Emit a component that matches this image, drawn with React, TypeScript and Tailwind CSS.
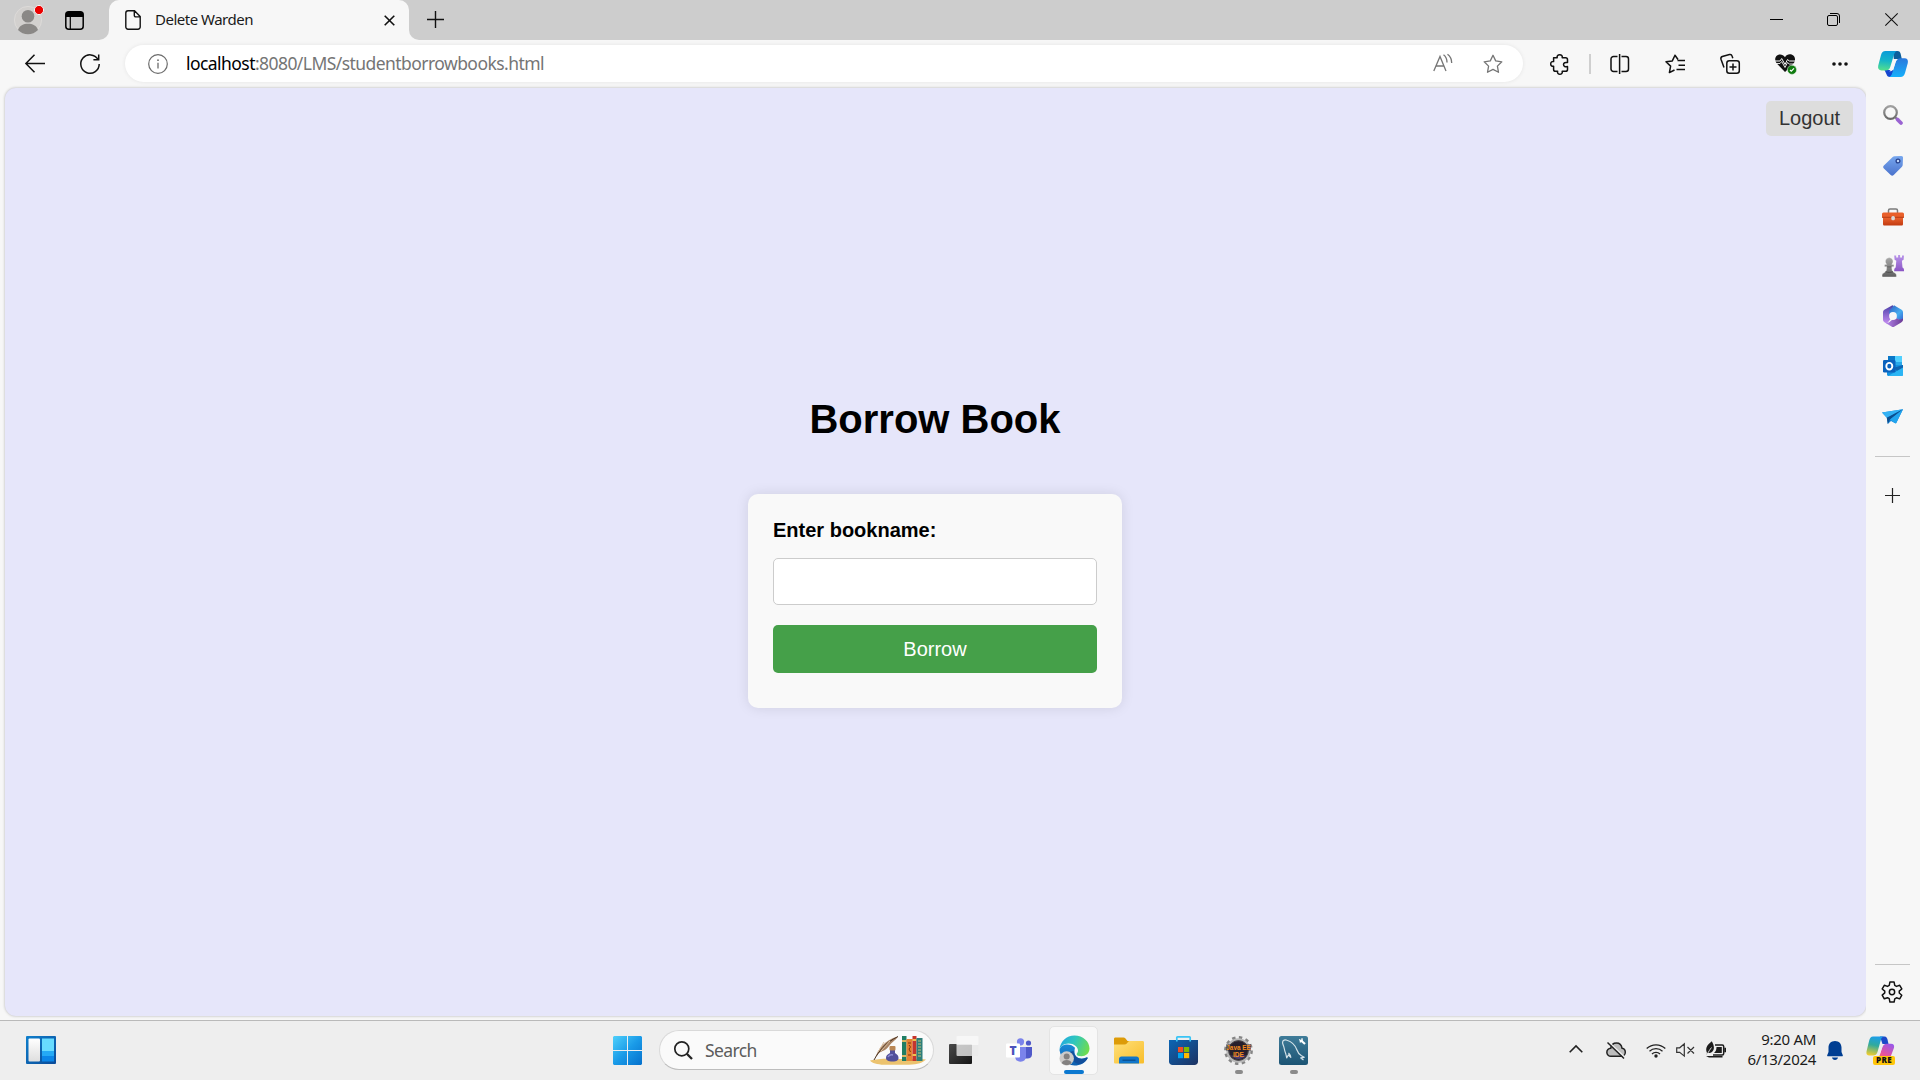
import React from "react";

const UI = "font-['Noto_Sans',sans-serif]";

type SvgProps = { w: number; h: number; vb?: string; className?: string; children: React.ReactNode };

function Svg({ w, h, vb, className = "", children }: SvgProps) {
  return (
    <svg width={w} height={h} viewBox={vb ?? `0 0 ${w} ${h}`} fill="none" className={`shrink-0 overflow-visible ${className}`}>
      {children}
    </svg>
  );
}

const STAR = "M10 1.3 L12.7 6.9 L18.8 7.8 L14.4 12.1 L15.5 18.3 L10 15.4 L4.5 18.3 L5.6 12.1 L1.2 7.8 L7.3 6.9 Z";

function TabStrip() {
  return (
    <div className="flex h-10 shrink-0 bg-[#f7f7f7]">
      <div className="flex w-[109px] items-center rounded-br-[10px] bg-[#cdcdcd] pl-[14px]">
        <div className="relative">
          <Svg w={28} h={28}>
            <circle cx="14" cy="14" r="13.6" fill="#d2d0ce" stroke="#dfdddb" strokeWidth=".8" />
            <circle cx="14" cy="10.2" r="6.3" fill="#8a8886" />
            <path d="M4 24c1.500-4.700 5.500-6.300 10-6.300s8.500 1.600 10 6.300a14 14 0 0 1-20 0z" fill="#8a8886" />
            <circle cx="25" cy="4" r="4.600" fill="#eb0000" stroke="#f3f3f3" strokeWidth="1" />
          </Svg>
        </div>
        <Svg w={19} h={19} className="ml-[23px]">
          <rect x=".8" y=".8" width="17.400" height="17.400" rx="3" stroke="#000" strokeWidth="1.500" />
          <path d="M.8 3.500Q.8.8 3.500.8h12q2.700 0 2.700 2.700V6H.8z" fill="#000" />
          <path d="M5.300 6v12" stroke="#000" strokeWidth="1.200" />
        </Svg>
      </div>
      <div className="w-[300px] bg-[#cdcdcd]">
        <div className="flex h-10 items-center rounded-t-[10px] bg-[#f7f7f7] pl-4">
          <Svg w={16} h={20}>
            <path d="M3 .8h6.500l5.700 5.800V17a2.200 2.200 0 0 1-2.200 2.200H3A2.200 2.200 0 0 1 .8 17V3A2.200 2.200 0 0 1 3 .8zM9.300 1v4.400a1.500 1.500 0 0 0 1.500 1.500h4.300" stroke="#111" strokeWidth="1.400" />
          </Svg>
          <span className={`mb-[2px] ml-[14px] w-[229px] whitespace-nowrap text-[15px] leading-5 tracking-[-0.5px] text-[#1b1b1b] ${UI}`}>Delete Warden</span>
          <Svg w={11} h={11} className="mt-px">
            <path d="M.7.7l9.600 9.600M10.300.7L.7 10.300" stroke="#111" strokeWidth="1.600" />
          </Svg>
        </div>
      </div>
      <div className="flex flex-1 items-center justify-between rounded-bl-[10px] bg-[#cdcdcd] pb-px pl-[18px] pr-[22px]">
        <Svg w={17} h={17}>
          <path d="M8.500 0v17M0 8.500h17" stroke="#111" strokeWidth="1.400" />
        </Svg>
        <div className="flex items-center">
          <Svg w={13} h={13}>
            <path d="M0 6.500h13" stroke="#000" strokeWidth="1" />
          </Svg>
          <Svg w={13} h={13} className="ml-11">
            <rect x=".5" y="2.500" width="10" height="10" rx="1.500" stroke="#000" />
            <path d="M3 .5h7a2.500 2.500 0 0 1 2.500 2.500v7" stroke="#000" />
          </Svg>
          <Svg w={13} h={13} className="ml-[45px]">
            <path d="M.3.3l12.400 12.400M12.700.3L.3 12.700" stroke="#111" strokeWidth="1.100" />
          </Svg>
        </div>
      </div>
    </div>
  );
}

function CopilotMark({ w, h }: { w: number; h: number }) {
  return (
    <Svg w={w} h={h} vb="0 0 30 26">
      <defs>
        <linearGradient id="cpA" x1=".4" y1="0" x2=".3" y2="1">
          <stop offset="0" stopColor="#0a9bd8" />
          <stop offset=".5" stopColor="#16b5c8" />
          <stop offset="1" stopColor="#55e08c" />
        </linearGradient>
        <linearGradient id="cpB" x1=".5" y1="0" x2=".5" y2="1">
          <stop offset="0" stopColor="#2a78dc" />
          <stop offset="1" stopColor="#17b0fb" />
        </linearGradient>
      </defs>
      <path d="M15 0h4.500c2 0 2.700 1.300 3.200 3.100L23.800 8h-8z" fill="#0d5f9c" />
      <path d="M6.500 19h9l-1.500 7h-2c-2.200 0-3-1.200-3.600-3z" fill="#1546d0" />
      <path d="M7.500 0h12c-2 .2-2.900 1.600-3.600 4l-3.500 11.500C11.500 18.500 10 19.500 7.500 19.500H3.500C.8 19.500-.4 17.500.2 14.800L3 4C3.800 1.300 5 0 7.500 0z" fill="url(#cpA)" />
      <path d="M22.500 26h-12c2-.2 3.100-1.600 3.800-4l3.300-10.500c.9-3 2.400-4.200 4.900-4.200h4c2.700 0 3.900 2 3.300 4.700L27 22c-.8 2.700-2 4-4.500 4z" fill="url(#cpB)" />
      <path d="M17.500 8.300h2.200c-1.300.7-2 2-2.500 3.700l-1.800 5.800c-.5 1.600-1.300 2.300-3 2.400h-1.200c1.500-.6 2.300-1.800 2.800-3.400l1.700-5.700c.4-1.400.9-2.400 1.800-2.800z" fill="#f7f7f7" />
    </Svg>
  );
}

function Toolbar() {
  return (
    <div className="flex h-12 shrink-0 items-center bg-[#f7f7f7] pb-px pl-[25px]">
      <Svg w={20} h={19}>
        <path d="M20 9.500H1M9.500.7L.9 9.500l8.600 8.800" stroke="#111" strokeWidth="1.500" />
      </Svg>
      <Svg w={20} h={20} className="ml-[35px]">
        <path d="M18 5.500A9.200 9.200 0 1 0 19.200 10M18.700.5v5.200h-5.300" stroke="#111" strokeWidth="1.500" />
      </Svg>
      <div className="ml-[25px] flex h-[37px] w-[1398px] items-center rounded-full bg-white pl-[23px] shadow-[0_0_4px_rgba(0,0,0,0.08)]">
        <Svg w={20} h={20}>
          <circle cx="10" cy="10" r="9.300" stroke="#6b6b6b" strokeWidth="1.200" />
          <path d="M10 8.800V14.500" stroke="#6b6b6b" strokeWidth="1.300" />
          <circle cx="10" cy="6.200" r=".9" fill="#6b6b6b" />
        </Svg>
        <span className={`mb-[2px] ml-[18px] flex-1 whitespace-nowrap text-[17.500px] leading-6 tracking-[-0.56px] text-[#757575] ${UI}`}>
          <span className="text-black">localhost</span>:8080/LMS/studentborrowbooks.html
        </span>
        <Svg w={20} h={18} className="mb-[2px]">
          <path d="M.8 17L7 2.500 13 17M2.700 12h8.500M10.500.8c2.300 1.700 3.500 4.300 3.500 7.700M14.500.3c2.800 2.100 4.200 5.200 4.200 8.700" stroke="#757575" strokeWidth="1.300" />
        </Svg>
        <Svg w={20} h={20} className="ml-[30px] mr-5">
          <path d={STAR} stroke="#757575" strokeWidth="1.300" strokeLinejoin="round" />
        </Svg>
      </div>
      <Svg w={20} h={20} className="ml-[27px]">
        <path d="M3.600 3.800h3.600c-.5-2 .8-3.100 2.500-3.100s3 1.100 2.500 3.100h3.400c1.100 0 1.900.8 1.900 1.900v2.900c-2.300-.5-4 .2-4 2s1.700 2.500 4 2v2.800c0 1.100-.8 1.900-1.900 1.900h-3.400c.5 2-.8 3-2.300 3s-2.800-1-2.300-3H5.500c-1.100 0-1.900-.8-1.900-1.900v-3.100C1.900 12.600.7 11.500.7 9.900s1.200-2.600 2.900-2.300z" stroke="#111" strokeWidth="1.500" strokeLinejoin="round" />
      </Svg>
      <div className="ml-[19px] h-5 w-[2px] bg-[#cfcfcf]" />
      <Svg w={20} h={20} className="ml-[19px]">
        <path d="M7.500 2.500h-4A2.500 2.500 0 0 0 1 5v10a2.500 2.500 0 0 0 2.500 2.500h4M11.500 2.500H16A2.500 2.500 0 0 1 18.500 5v10a2.500 2.500 0 0 1-2.500 2.500h-4.500M9.600 0v20" stroke="#111" strokeWidth="1.500" />
      </Svg>
      <Svg w={20} h={20} className="ml-[35px]">
        <path d="M13 5.500L10 1.200 7.300 6.900 1 7.800l4.600 4.300-1.200 6.500L9.500 16M12.500 6.600H20M13.500 11.200H20M11.500 15.500H20" stroke="#111" strokeWidth="1.500" strokeLinejoin="round" />
      </Svg>
      <Svg w={20} h={20} className="ml-[35px]">
        <rect x="6.800" y="6.800" width="12.500" height="12.500" rx="2.500" stroke="#111" strokeWidth="1.500" />
        <path d="M13 9.500v7M9.500 13h7M4 13.500L1 5.200C.6 3.900 1 3 2.300 2.500L9.500.6c1.300-.3 2.200.2 2.600 1.500l.7 2.200" stroke="#111" strokeWidth="1.500" />
      </Svg>
      <Svg w={22} h={20} className="ml-[35px]">
        <path d="M10 18L2 9.700C-.6 6.700-.2 3.300 2 1.600 4.600-.3 8 .4 10 3.200 12-.4 16-.4 18.300 1.600c2.300 2 2.300 5.500 0 8.100z" fill="#111" />
        <path d="M0 7h5l1.700-2.500 3.300 6 2.500-5 1.800 1.500H20.500" stroke="#f7f7f7" strokeWidth="1" />
        <path d="M1 9.500h4l1.700-2 3.300 6 2.500-5 1.800 1.500h5" stroke="#f7f7f7" strokeWidth=".9" />
        <circle cx="17" cy="15.800" r="4.600" fill="#107c10" stroke="#f7f7f7" strokeWidth=".5" />
        <path d="M15 16l1.300 1.200 2.700-2.800" stroke="#fff" strokeWidth="1.200" />
      </Svg>
      <Svg w={16} h={4} className="ml-[35px]">
        <circle cx="2" cy="2" r="1.800" fill="#111" />
        <circle cx="8" cy="2" r="1.800" fill="#111" />
        <circle cx="14" cy="2" r="1.800" fill="#111" />
      </Svg>
      <div className="ml-[30px]">
        <CopilotMark w={30} h={26} />
      </div>
    </div>
  );
}

function SidebarCell({ className, children }: { className: string; children: React.ReactNode }) {
  return <div className={`flex w-full items-center justify-center ${className}`}>{children}</div>;
}

function Sidebar() {
  return (
    <div className="flex w-[53px] flex-col items-center bg-[#f7f7f7] pt-[2px]">
      <SidebarCell className="h-[50px]">
        <Svg w={20} h={20}>
          <defs>
            <linearGradient id="lens" x1="0" y1="0" x2="0" y2="1">
              <stop offset="0" stopColor="#a0a0a0" />
              <stop offset="1" stopColor="#696969" />
            </linearGradient>
          </defs>
          <circle cx="7.500" cy="7.500" r="6.300" stroke="url(#lens)" strokeWidth="2.200" />
          <path d="M12 12l3 3" stroke="#777" strokeWidth="2" />
          <path d="M14.500 14.500l3.500 3.500" stroke="#9a63d2" strokeWidth="3.800" strokeLinecap="round" />
        </Svg>
      </SidebarCell>
      <SidebarCell className="h-[51px]">
        <Svg w={20} h={20}>
          <defs>
            <linearGradient id="tag" x1="0" y1="0" x2="0" y2="1">
              <stop offset="0" stopColor="#77a7ee" />
              <stop offset="1" stopColor="#4a72cc" />
            </linearGradient>
          </defs>
          <path d="M11.500.3l6.800-.2c1.200 0 1.800.7 1.700 1.800l-.3 7c0 .8-.4 1.400-1 2l-8 8.200c-1 1-2 1-3 0L.9 12.400c-1-1-1-2 0-3L9.700 1c.5-.5 1-.7 1.800-.7z" fill="url(#tag)" />
          <circle cx="15" cy="5" r="1.900" fill="#bcd5fa" stroke="#27418c" strokeWidth="1.300" />
        </Svg>
      </SidebarCell>
      <SidebarCell className="h-[51px]">
        <Svg w={22} h={18}>
          <defs>
            <linearGradient id="box" x1="0" y1="0" x2="0" y2="1">
              <stop offset="0" stopColor="#ec6530" />
              <stop offset="1" stopColor="#c23a10" />
            </linearGradient>
          </defs>
          <path d="M6.500 5V2.500C6.500 1.500 7 1 8 1h6c1 0 1.500.5 1.500 1.500V5" stroke="#7b7b7b" strokeWidth="1.500" />
          <rect x="0" y="4.500" width="22" height="5.500" rx="1.500" fill="#e9602b" />
          <path d="M1 9.300h20V16c0 1-.6 1.500-1.500 1.500h-17C1.600 17.500 1 17 1 16z" fill="url(#box)" />
          <path d="M0 9.300h22" stroke="#a93410" strokeWidth=".8" />
          <rect x="9.300" y="8" width="3.600" height="4.200" rx="1.500" fill="#d8d8d8" />
        </Svg>
      </SidebarCell>
      <SidebarCell className="h-[48px]">
        <Svg w={22} h={22}>
          <defs>
            <linearGradient id="rook" x1="0" y1="0" x2="0" y2="1">
              <stop offset="0" stopColor="#b995ea" />
              <stop offset="1" stopColor="#8a55c4" />
            </linearGradient>
            <linearGradient id="pawn" x1="0" y1="0" x2="0" y2="1">
              <stop offset="0" stopColor="#a8a8a8" />
              <stop offset="1" stopColor="#5f5f5f" />
            </linearGradient>
          </defs>
          <path d="M12.200.6h2v1.800h1.900V0h2v2.400H20V.6h2l-.4 4.200-1.700 1 .6 6.700c1.200.6 1.700 1.700 1.500 3.700h-9.800c-.1-2 .3-3.100 1.500-3.700l.6-6.700-1.700-1z" fill="url(#rook)" />
          <path d="M7.200 2.600a3.900 3.900 0 0 1 2.600 6.800h1.500c.9 0 .9 2.300 0 2.300H9.600l.6 3.600c.2.900.8 1.600 2 2.200 1.700.8 2.300 1.700 2.300 3.400 0 .8-.4 1.100-1.100 1.100H1.100C.4 22 0 21.700 0 20.900c0-1.700.6-2.600 2.300-3.400 1.200-.6 1.800-1.300 2-2.200l.5-3.600H3.100c-.9 0-.9-2.300 0-2.300h1.500a3.900 3.900 0 0 1 2.600-6.800z" fill="url(#pawn)" stroke="#f7f7f7" strokeWidth=".4" />
          <path d="M3.500 16.700c2.500 1 5 1 7.500 0" stroke="#505050" strokeWidth="1" />
          <path d="M4.800 11.900h4.900" stroke="#5c5c5c" strokeWidth=".8" />
        </Svg>
      </SidebarCell>
      <SidebarCell className="h-[51px]">
        <Svg w={20} h={22}>
          <defs>
            <linearGradient id="m1" x1="0" y1="0" x2="0" y2="1">
              <stop offset="0" stopColor="#4a3fa8" />
              <stop offset="1" stopColor="#c48cf0" />
            </linearGradient>
            <linearGradient id="m2" x1="0" y1="0" x2="1" y2="1">
              <stop offset="0" stopColor="#2f5fc0" />
              <stop offset=".6" stopColor="#45aef0" />
              <stop offset="1" stopColor="#3560d0" />
            </linearGradient>
            <linearGradient id="m3" x1="0" y1="0" x2="1" y2="0">
              <stop offset="0" stopColor="#b98af0" />
              <stop offset="1" stopColor="#6a3a94" />
            </linearGradient>
          </defs>
          <path d="M9 .4L1.800 4.600C.6 5.300 0 6.200 0 7.500v7c0 1.300.6 2.200 1.800 2.900L4 18.500 10 11V.2z" fill="url(#m1)" />
          <path d="M6.300 8.800V6.500c0-1 .5-1.500 1-2L11 .3 18.200 4.600C19.400 5.300 20 6.200 20 7.500v7L17.500 16 10 11z" fill="url(#m2)" />
          <path d="M20 13.500v1c0 1.300-.6 2.200-1.800 2.900l-6.700 4c-1 .7-2 .7-3 0L1.800 17.400c1.700.8 3 .6 4.700-.4L10 14l3.700-.7c2 1.700 4.300 1.700 6.300.2z" fill="url(#m3)" />
          <circle cx="10" cy="11" r="3.900" fill="#f7f7f7" />
        </Svg>
      </SidebarCell>
      <SidebarCell className="h-[50px]">
        <Svg w={20} h={20}>
          <rect x="5" y="0" width="14" height="13" rx="1" fill="#28a8ea" />
          <path d="M5 0h7v6H5z" fill="#0a78c8" />
          <path d="M12 0h7v6h-7z" fill="#50d0ff" />
          <path d="M4 9h16v9.500c0 .8-.6 1.500-1.500 1.500h-13C4.600 20 4 19.300 4 18.500z" fill="#1490df" />
          <path d="M20 9v10L10 12z" fill="#0f64b0" />
          <path d="M5 20L20 11.500v7c0 1-.6 1.500-1.500 1.500z" fill="#2bb5f4" />
          <rect x="0" y="4" width="12.500" height="12.500" rx="1.300" fill="#0b62bd" />
          <ellipse cx="6.300" cy="10.200" rx="3" ry="3.300" stroke="#fff" strokeWidth="1.900" />
        </Svg>
      </SidebarCell>
      <SidebarCell className="h-[50px]">
        <Svg w={21} h={17} className="mt-[2px]">
          <path d="M0 3.500L21 .3 14.500 13.500c-.4.900-1 1-1.700.6L9 12l-3.200 3-1-6.300z" fill="#1684d8" />
          <path d="M0 3.500L21 .3 4.800 8.700z" fill="#34b2f4" />
          <path d="M21 .3L4.800 8.700l1 6.300L8 10.500z" fill="#0c4f8f" />
          <path d="M21 .3L8 10.500l4.800 3.600c.7.400 1.300.3 1.700-.6z" fill="#22a5ee" />
        </Svg>
      </SidebarCell>
      <div className="mt-[15px] h-px w-[35px] bg-[#c6c6c6]" />
      <SidebarCell className="mt-[31px] h-[15px] pr-px">
        <Svg w={15} h={15}>
          <path d="M7.500 0v15M0 7.500h15" stroke="#222" strokeWidth="1.200" />
        </Svg>
      </SidebarCell>
      <div className="mt-auto h-px w-[35px] bg-[#c6c6c6]" />
      <SidebarCell className="mb-[17px] mt-4 h-[22px] pr-px">
        <Svg w={22} h={22} vb="0 0 24 24">
          <path d="M9.700 1.200h4.600l.7 3.600 1.900 1.100 3.500-1.200 2.300 4-2.800 2.400v2.000l2.800 2.400-2.300 4-3.500-1.200-1.900 1.100-.7 3.600H9.700L9 19.300l-1.900-1.100-3.500 1.200-2.300-4 2.800-2.400v-2.000L1.300 8.700l2.300-4 3.500 1.200L9 4.800z" stroke="#111" strokeWidth="1.600" strokeLinejoin="round" />
          <circle cx="12" cy="12" r="2.900" stroke="#111" strokeWidth="1.600" />
        </Svg>
      </SidebarCell>
    </div>
  );
}

function Page() {
  return (
    <div className="flex h-[928px] w-[1861px] flex-col rounded-[11px] bg-[#e6e6fa] pr-px font-['Liberation_Sans',Arial,sans-serif] shadow-[0_0_3px_rgba(0,0,0,0.28)]">
      <div className="flex justify-end pr-3 pt-[13px]">
        <button className="h-[35px] w-[87px] rounded-[5px] bg-[#ddd] pb-[2px] text-[20px] leading-none text-[#333]">Logout</button>
      </div>
      <h1 className="mt-[260px] text-center text-[40px] font-bold leading-[46px] text-black">Borrow Book</h1>
      <div className="mx-auto mt-[52px] h-[214px] w-[374px] rounded-[10px] bg-[#f9f9f9] px-[25px] pt-[25px] shadow-[0_0_12.5px_rgba(0,0,0,0.1)]">
        <label className="block text-[20px] font-bold leading-[23px] text-black">Enter bookname:</label>
        <input className="mt-[16px] block h-[47px] w-full rounded-[5px] border border-[#ccc] bg-white px-3" />
        <button className="mt-5 block h-12 w-full rounded-[5px] bg-[#45a049] text-[20px] leading-none text-white">Borrow</button>
      </div>
    </div>
  );
}

function TaskCell({ running, children }: { running?: boolean; children: React.ReactNode }) {
  return (
    <div className="relative flex h-[60px] w-[55px] shrink-0 items-center justify-center">
      {children}
      {running && <div className="absolute bottom-[6px] h-1 w-2 rounded-full bg-[#8a8a8a]" />}
    </div>
  );
}

function QuillArt() {
  return (
    <Svg w={56} h={30}>
      <path d="M0 25.500c8-2 18-2 28-1.500s20-.5 28 .5c-3 3-8 5-17 5.300H14C7 29.500 2 28 0 25.500z" fill="#ecc36f" />
      <path d="M5 23C8 15 14 5 28 1.500 26 5 22 7 19 11c-3 4.500-7 5-10 7z" fill="#a98465" />
      <path d="M4 25C9 16 15 8 28 1.500" stroke="#4b3524" strokeWidth="1" />
      <path d="M8 17l6-10M11 16l9-10" stroke="#d9bea0" strokeWidth="1" />
      <path d="M20 15h5v3c2.500 1.500 3.500 3 3.500 5s-1.500 3.500-6 3.500-6.500-1.500-6.500-3.500 1-3.500 4-5z" fill="#52509b" />
      <rect x="19.500" y="11" width="6" height="4.500" rx="1" fill="#b98654" />
      <path d="M18 22c1-2 3-2.500 5-2" stroke="#8b8bd3" strokeWidth="1.500" />
      <rect x="32" y="1" width="4.500" height="25" fill="#1f7d63" />
      <rect x="32" y="5" width="4.500" height="2" fill="#d9b460" />
      <rect x="32" y="20" width="4.500" height="2" fill="#d9b460" />
      <rect x="36.500" y="4" width="6" height="22" fill="#e78232" />
      <path d="M38 8h3M38 20h3M39 10l1.500 2-1.500 2 1.500 3" stroke="#7d3212" />
      <rect x="42.500" y="1" width="4" height="25" fill="#c6352c" />
      <rect x="42.500" y="4" width="4" height="2" fill="#efc14d" />
      <rect x="42.500" y="19" width="4" height="2" fill="#efc14d" />
      <rect x="46.500" y="3" width="6" height="23" fill="#2f7f79" />
      <path d="M48 6h3M48 9h3M48 12h3M48 15h3M48 18h3M48 21h3" stroke="#c9c17b" />
    </Svg>
  );
}

function EdgeLogo() {
  return (
    <Svg w={31} h={31} className="ml-px">
      <defs>
        <linearGradient id="eg1" x1="0" y1=".3" x2="1" y2=".6">
          <stop offset="0" stopColor="#23a9e1" />
          <stop offset=".45" stopColor="#2fc7bd" />
          <stop offset="1" stopColor="#70dc4c" />
        </linearGradient>
        <linearGradient id="eg2" x1="0" y1="0" x2="0" y2="1">
          <stop offset="0" stopColor="#1a8bd8" />
          <stop offset="1" stopColor="#0d5faf" />
        </linearGradient>
      </defs>
      <path d="M.5 15C2 23 6 30 15.500 30.500c6 0 10.500-2.500 13-7 .5-1-.3-1.300-1-.9-5 2.500-10 1-11.500-3-.8-3-.5-5 0-6.800C12 8 2 8 .5 15z" fill="url(#eg2)" />
      <path d="M10.500 17c0 6 5 12.500 11 12 3.500-1.200 5.500-3 7-5.500.5-1-.3-1.300-1-.9-5 2.500-12 1-13-6.600z" fill="#124f9c" />
      <path d="M.5 14.500C1.200 6.500 7.500.5 15.500.5c8.500 0 15 6 15 13 0 5-4 7.700-8 7.700-3.500 0-4.800-1-4.800-2 0-.8 1.300-1.500 1.300-3.700 0-3.500-4-7-9.500-7-5 0-8 3-9 6z" fill="url(#eg1)" />
      <circle cx="7.700" cy="23.500" r="7.200" fill="#cdcbc9" />
      <circle cx="7.700" cy="21.500" r="3" fill="#838180" />
      <path d="M2.800 28c.5-2 2.400-3 4.900-3s4.400 1 4.900 3c-2.500 2.800-7.300 2.800-9.800 0z" fill="#838180" />
    </Svg>
  );
}

function GearBadge() {
  return (
    <Svg w={29} h={29}>
      <circle cx="14.500" cy="14.500" r="12.800" stroke="#858585" strokeWidth="3.200" strokeDasharray="3.350 3.350" />
      <circle cx="14.500" cy="14.500" r="11.200" fill="#27202c" stroke="#b8b8b8" strokeWidth="2" />
      <circle cx="14.500" cy="14.500" r="9.800" stroke="#555" strokeWidth=".8" />
      <path d="M7 19.500c4 4.500 11 4.500 15 0z" fill="#4c3d70" />
      <rect x="2" y="8.300" width="25" height="6.300" fill="#27202c" fillOpacity=".6" />
      <text x="2.300" y="14" fontSize="7" fontWeight="700" fontFamily="Liberation Sans, sans-serif" fill="#f58d20" textLength="24.500" lengthAdjust="spacingAndGlyphs">Java EE</text>
      <text x="9" y="20.500" fontSize="7" fontWeight="700" fontFamily="Liberation Sans, sans-serif" fill="#f58d20" textLength="11" lengthAdjust="spacingAndGlyphs">IDE</text>
    </Svg>
  );
}

function Taskbar() {
  return (
    <div className="flex h-[60px] shrink-0 border-t border-[#b9b9b9] bg-[#eeeeee]">
      <div className="flex w-[600px] items-center pl-[26px]">
        <Svg w={30} h={28} className="mb-px">
          <defs>
            <linearGradient id="wg" x1="0" y1="0" x2="1" y2="1">
              <stop offset="0" stopColor="#0f7fcc" />
              <stop offset="1" stopColor="#0a4a98" />
            </linearGradient>
            <linearGradient id="wh" x1="0" y1="0" x2="0" y2="1">
              <stop offset="0" stopColor="#fff" />
              <stop offset="1" stopColor="#dedede" />
            </linearGradient>
          </defs>
          <rect width="30" height="28" rx="1" fill="url(#wg)" />
          <rect x="2.500" y="2.500" width="11.500" height="23" rx="1" fill="url(#wh)" />
          <rect x="16" y="2.500" width="12" height="12.500" fill="#68dcff" />
          <rect x="16" y="15" width="12" height="5" fill="#24aaf6" />
          <rect x="16" y="20" width="12" height="5.500" fill="#0b86e8" />
        </Svg>
      </div>
      <div className="-mt-px flex items-center">
        <div className="flex w-[59px] justify-start pl-[13px]">
          <Svg w={29} h={29}>
            <defs>
              <linearGradient id="win" gradientUnits="userSpaceOnUse" x1="0" y1="0" x2="29" y2="29">
                <stop offset="0" stopColor="#4fd0fb" />
                <stop offset=".5" stopColor="#1a9be8" />
                <stop offset="1" stopColor="#0570cc" />
              </linearGradient>
            </defs>
            <path d="M1 0h13v14H0V1zM15 0h13l1 1v13H15zM0 15h14v14H1l-1-1zM15 15h14v13l-1 1H15z" fill="url(#win)" />
          </Svg>
        </div>
        <div className="flex h-[40px] w-[275px] items-center rounded-full border border-[#d9d9d9] border-b-[#bdbdbd] bg-[#fafafa] pl-[14px]">
          <Svg w={19} h={19}>
            <circle cx="7.800" cy="7.800" r="7" stroke="#222" strokeWidth="1.700" />
            <path d="M12.800 12.800l5.200 5.200" stroke="#222" strokeWidth="2.300" />
          </Svg>
          <span className={`ml-3 w-[165px] text-[17.500px] leading-6 tracking-[-0.6px] text-[#5c5c5c] ${UI}`}>Search</span>
          <QuillArt />
        </div>
        <div className="w-[2px]" />
        <TaskCell>
          <Svg w={30} h={28}>
            <defs>
              <linearGradient id="tv" x1="0" y1="0" x2="1" y2="1">
                <stop offset="0" stopColor="#4a4a4a" />
                <stop offset="1" stopColor="#151515" />
              </linearGradient>
            </defs>
            <rect x="0" y="8" width="23" height="20" rx="1" fill="url(#tv)" />
            <rect x="7.500" y="0" width="22" height="20" rx="1" fill="#eaeaea" fillOpacity=".8" />
            <rect x="7.500" y="0" width="22" height="9" rx="1" fill="#fff" fillOpacity=".6" />
          </Svg>
        </TaskCell>
        <TaskCell>
          <Svg w={26} h={24} className="mb-px">
            <circle cx="14.500" cy="3.800" r="3.600" fill="#7b83eb" />
            <circle cx="22.500" cy="5" r="2.600" fill="#5059c9" />
            <path d="M18 9h8v7.500c0 2.500-2 4-4.500 4H18z" fill="#5059c9" />
            <path d="M9 9h11v9c0 3.500-2 5.700-5.500 5.700S9 21.500 9 18z" fill="#7b83eb" />
            <rect x="0" y="5.500" width="14" height="14" rx="1" fill="#fff" />
            <text x="7" y="16.700" textAnchor="middle" fontSize="12" fontWeight="800" fontFamily="Open Sans, sans-serif" fill="#4b53bc">T</text>
          </Svg>
        </TaskCell>
        <TaskCell>
          <div className="flex h-[49px] w-[49px] items-center justify-center rounded-[5px] border border-[#e4e4e4] bg-[#f8f8f8]">
            <EdgeLogo />
          </div>
          <div className="absolute bottom-[6px] h-1 w-5 rounded-full bg-[#0b78d0]" />
        </TaskCell>
        <TaskCell>
          <Svg w={30} h={27}>
            <defs>
              <linearGradient id="fold" x1="0" y1="0" x2="1" y2="1">
                <stop offset="0" stopColor="#ffe07a" />
                <stop offset="1" stopColor="#f8bd2a" />
              </linearGradient>
            </defs>
            <path d="M0 2c0-1 .5-1.500 1.500-1.500h8c.8 0 1.300.3 2 1L13.500 4H28v8H0z" fill="#dd9b08" />
            <path d="M0 7.500h10.500c1 0 1.700-.3 2.300-1l1.200-1.500c.6-.7 1-1 2-1h12.500c1 0 1.500.5 1.500 1.500V25c0 1-.5 1.500-1.500 1.500h-27C.5 26.500 0 26 0 25z" fill="url(#fold)" />
            <path d="M5 26.500V22c0-1.500 1-2.500 2.500-2.500h15c1.500 0 2.500 1 2.500 2.500v4.500z" fill="#1176ca" />
            <path d="M8.500 23.200h13" stroke="#0a4d8e" strokeWidth="1.300" />
          </Svg>
        </TaskCell>
        <TaskCell>
          <Svg w={29} h={29}>
            <defs>
              <linearGradient id="store" x1="0" y1="0" x2="1" y2="1">
                <stop offset="0" stopColor="#0c66b5" />
                <stop offset="1" stopColor="#1d3261" />
              </linearGradient>
            </defs>
            <path d="M0 4h29v21.500c0 2-1.500 3.500-3.500 3.500h-22C1.500 29 0 27.500 0 25.500z" fill="url(#store)" />
            <path d="M7.800 5.500V1.500c0-.5.200-.7.700-.7h12c.5 0 .7.200.7.700v4" stroke="#3ac4f5" strokeWidth="1.700" />
            <rect x="9" y="11" width="5.200" height="5.200" fill="#f25022" />
            <rect x="15" y="11" width="5.200" height="5.200" fill="#7fba00" />
            <rect x="9" y="17" width="5.200" height="5.200" fill="#00a4ef" />
            <rect x="15" y="17" width="5.200" height="5.200" fill="#ffb900" />
          </Svg>
        </TaskCell>
        <TaskCell running>
          <GearBadge />
        </TaskCell>
        <TaskCell running>
          <Svg w={29} h={29}>
            <defs>
              <linearGradient id="sql" x1="0" y1="0" x2="0" y2="1">
                <stop offset="0" stopColor="#3f7c99" />
                <stop offset="1" stopColor="#1c5474" />
              </linearGradient>
            </defs>
            <rect width="29" height="29" rx="2.500" fill="url(#sql)" />
            <path d="M7 18.500C6 16 5.500 14 5 11.500 4.500 9 3.300 8 3.600 6 4 4 6 3.600 8 4.300c5 1.600 8.200 5.200 9.700 9.200.9 2.600 2.300 4.800 4.800 6.300l2.700 1.500-3.400.6 2.700 2M7 18.500l.7 3.500 1.600-3 2.500 2.300c-.3-2-1.300-3.300-2.300-4.300M24.500 23.900l-1-.8" stroke="#d4e2e8" strokeWidth="1.200" strokeLinejoin="round" />
            <path d="M21.500 4l4.500 4" stroke="#fff" strokeWidth="2.200" />
            <path d="M20.300 3.400l2 2.200M23 2.300l.2 2.700-2.500 1.200" stroke="#fff" strokeWidth="1.300" />
          </Svg>
        </TaskCell>
      </div>
      <div className="-mt-px flex flex-1 items-center justify-end pr-[24px]">
        <Svg w={14} h={8} className="-mt-[2px]">
          <path d="M.7 7.300L7 1l6.300 6.300" stroke="#222" strokeWidth="1.600" />
        </Svg>
        <Svg w={20} h={17} className="ml-[23px]">
          <path d="M5 14.300a4 4 0 0 1-.3-8C5.200 3 7.500 1 10.500 1s5 2 5.500 5.200c2 .3 3.300 1.900 3.300 4s-1.700 4.100-4 4.100z" fill="#bdbdbd" stroke="#222" strokeWidth="1.500" />
          <path d="M2.500-.2l16.500 15.700" stroke="#eee" strokeWidth="1.600" />
          <path d="M1.500.5l16.500 16" stroke="#222" strokeWidth="1.500" />
        </Svg>
        <Svg w={20} h={15} className="ml-[20px]">
          <path d="M.7 5.500a13.500 13.500 0 0 1 18.600 0" stroke="#222" strokeWidth="1.300" />
          <path d="M3.500 8.300a9.400 9.400 0 0 1 13 0M6 11a5.600 5.600 0 0 1 8 0" stroke="#222" strokeWidth="1.300" />
          <circle cx="10" cy="13" r="1.700" fill="#222" />
        </Svg>
        <Svg w={19} h={14} className="ml-[10px]">
          <path d="M.7 4.800h3L8.300.9v12.200L3.700 9.400h-3zM11.500 4l6.500 6.500M18 4l-6.500 6.500" stroke="#333" strokeWidth="1.200" />
        </Svg>
        <Svg w={20} h={16} className="mb-px ml-[11px]">
          <path d="M9 3h7.200q1.500 0 1.500 1.500v7q0 1.500-1.500 1.500H7" stroke="#1c1c1c" strokeWidth="1.500" />
          <path d="M10.500 5h5.300v6H8c1.800-1.300 2.500-3.500 2.500-6z" fill="#1c1c1c" />
          <path d="M18.300 5.800H20v4.400h-1.700zM0 14h16.500v1.500H3z" fill="#1c1c1c" />
          <path d="M1 11C-1 6 1 3 5.800-.8 8.500 4 8.700 7.500 6 10c-1.500 1.300-3.300 1.300-4.300.7L.5 13z" fill="#1c1c1c" />
          <path d="M1.300 12.500C2.500 9.500 4 7.500 5.500 5.500" stroke="#eee" strokeWidth=".9" />
        </Svg>
        <div className={`mb-[2px] ml-[14px] w-[76px] whitespace-nowrap text-right text-[15px] leading-5 tracking-[-0.3px] text-[#1b1b1b] ${UI}`}>
          <div>9:20 AM</div>
          <div>6/13/2024</div>
        </div>
        <Svg w={16} h={19} className="ml-[11px]">
          <path d="M8 0c4 0 6.500 2.800 6.500 6.500V11l1.300 3.200c.2.600-.1 1.100-.8 1.100H1c-.7 0-1-.5-.8-1.100L1.500 11V6.500C1.500 2.800 4 0 8 0zM5 16.500h6C10.700 18 9.600 19 8 19s-2.700-1-3-2.500z" fill="#003e92" />
        </Svg>
        <div className="relative ml-[23px] h-[29px] w-[30px]">
          <Svg w={30} h={29}>
            <defs>
              <linearGradient id="pa" x1=".5" y1="0" x2=".3" y2="1">
                <stop offset="0" stopColor="#1b9de8" />
                <stop offset=".45" stopColor="#31aa9d" />
                <stop offset="1" stopColor="#f0cd2e" />
              </linearGradient>
              <linearGradient id="pb" x1=".8" y1="0" x2=".2" y2="1">
                <stop offset="0" stopColor="#9a58e8" />
                <stop offset=".6" stopColor="#e8539b" />
                <stop offset="1" stopColor="#fa7b50" />
              </linearGradient>
            </defs>
            <path d="M14 .5h4.500c2 0 2.500 1.500 3 3L22.500 8h-6z" fill="#1b49c8" />
            <path d="M7 .5h11c-2 .3-2.600 1.500-3.300 4L11.500 16c-.8 2.500-2 3.500-4.500 3.500H3.500C1 19.500 0 18 .5 15.500L3.200 4.500C4 2 5 .5 7 .5z" fill="url(#pa)" />
            <path d="M20 25H9c2-.3 3.400-1.500 4.100-4l3-9.500c.8-2.500 2-3.800 4.500-3.800H25c2.500 0 3.500 1.500 3 4L24.500 21c-.8 2.500-2 4-4.500 4z" fill="url(#pb)" />
            <path d="M16.500 8h2.200c-1.300.7-2 2-2.500 3.700l-1.800 5.300c-.5 1.600-1.300 2.300-3 2.400h-1c1.300-.6 2.100-1.800 2.600-3.400l1.700-5.200c.4-1.400.9-2.400 1.800-2.800z" fill="#eee" />
          </Svg>
          <div className="absolute left-[7px] top-[20px] flex h-[9px] w-[22px] items-center justify-center rounded-[2px] bg-[#ffc60a] font-['Open_Sans',sans-serif] text-[8px] font-extrabold leading-none tracking-[0.3px] text-[#111]">PRE</div>
        </div>
      </div>
    </div>
  );
}

export default function App() {
  return (
    <div className="flex h-[1080px] w-[1920px] flex-col overflow-hidden bg-[#f7f7f7]">
      <TabStrip />
      <Toolbar />
      <div className="flex h-[932px] shrink-0 pl-[5px]">
        <Page />
        <Sidebar />
      </div>
      <Taskbar />
    </div>
  );
}
